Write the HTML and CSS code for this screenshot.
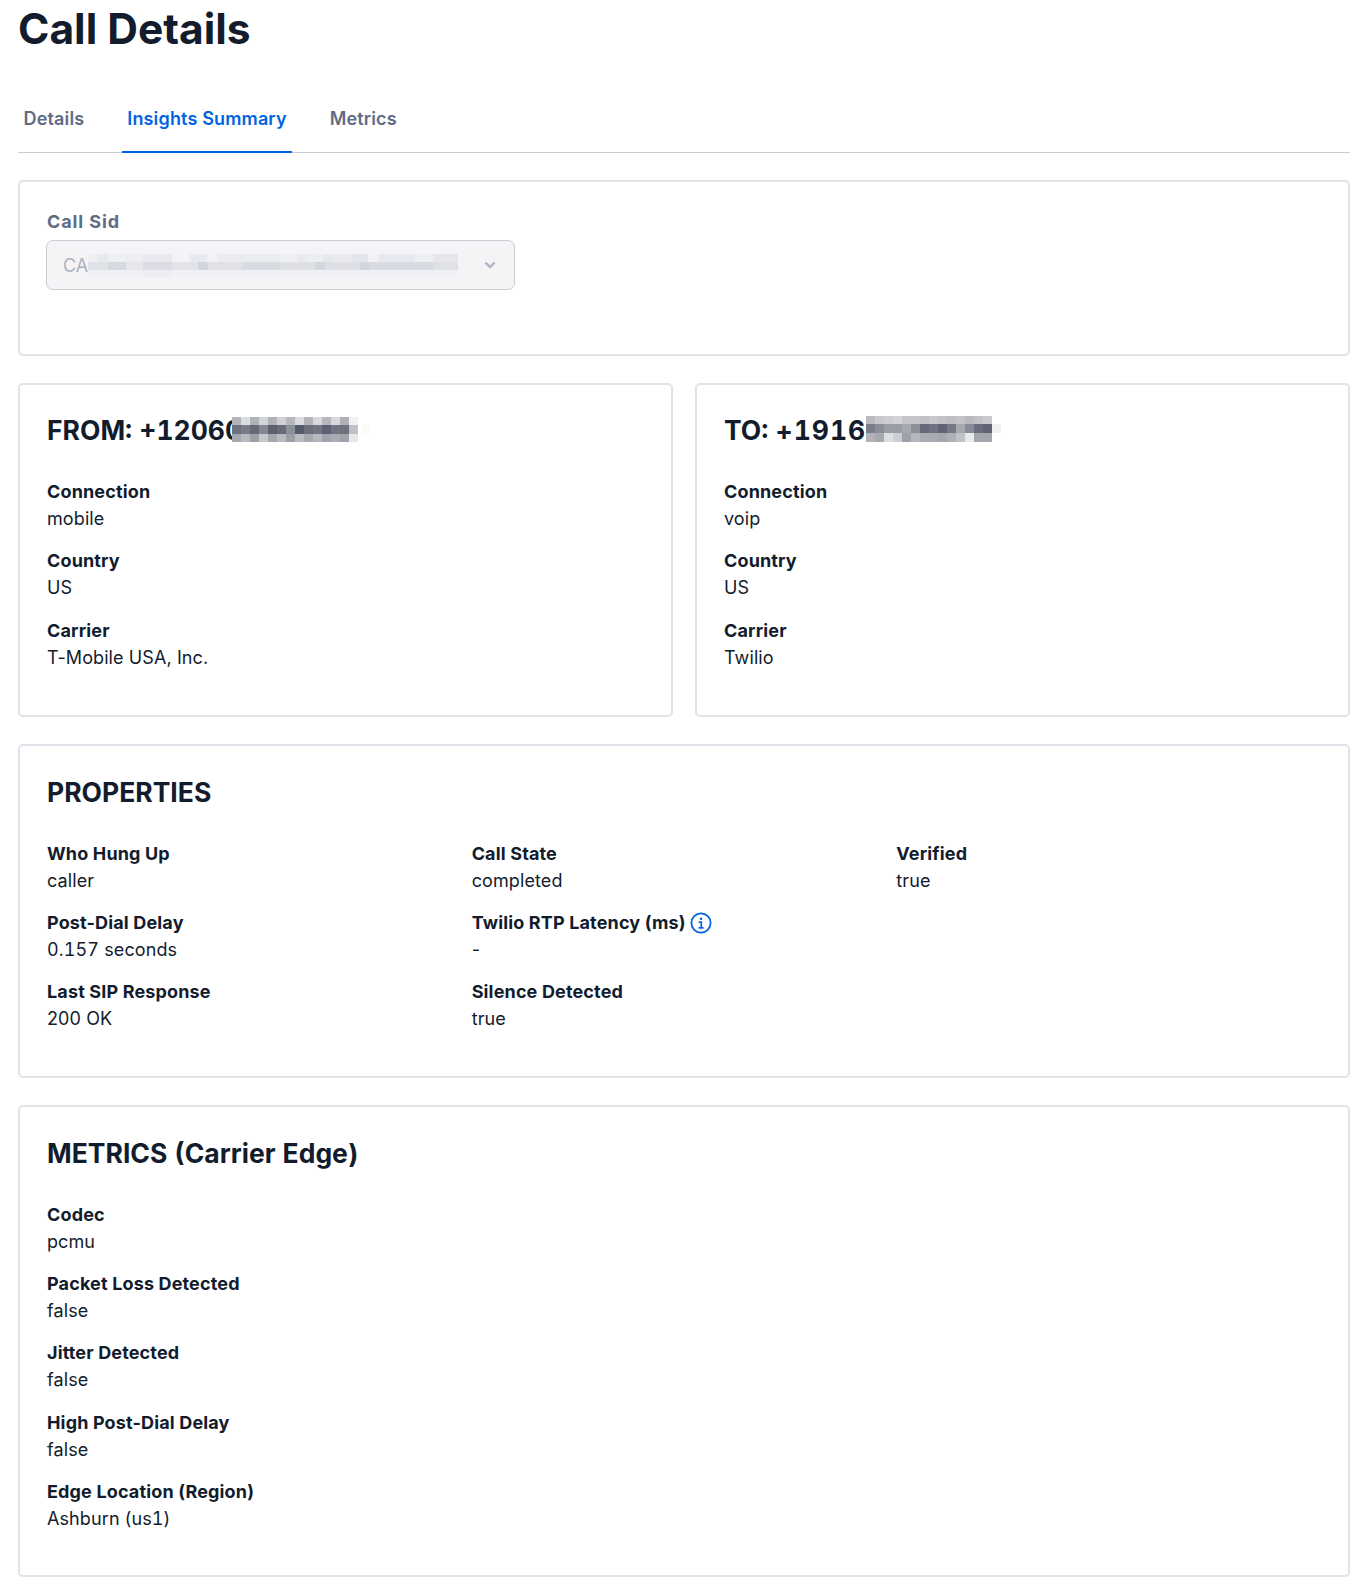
FILE: index.html
```html
<!DOCTYPE html>
<html lang="en">
<head>
  <meta charset="UTF-8">
  <title>Call Details</title>
  <link rel="stylesheet" href="styles.css">
</head>
<body>
  <h1 class="page-title">Call Details</h1>

  <div class="tabs">
    <a class="tab">Details</a>
    <a class="tab tab-active">Insights Summary</a>
    <a class="tab">Metrics</a>
  </div>

  <div class="card card-sid">
    <label class="sid-label">Call Sid</label>
    <div class="sid-select">
      <span class="sid-value">CA</span>
      <svg class="sid-redact" viewBox="88 253 375 23" width="375" height="23" shape-rendering="crispEdges">
        <rect x="88" y="253" width="370" height="8" fill="#eff0f3"/>
        <rect x="98" y="253" width="10" height="8" fill="#e8e9ee"/>
        <rect x="126" y="253" width="17" height="8" fill="#eceef1"/>
        <rect x="143" y="253" width="29" height="8" fill="#e8e9ee"/>
        <rect x="172" y="253" width="18" height="8" fill="#f3f3f5"/>
        <rect x="190" y="253" width="17" height="8" fill="#e8e9ee"/>
        <rect x="207" y="253" width="10" height="8" fill="#f2f2f5"/>
        <rect x="217" y="253" width="63" height="8" fill="#ebecf0"/>
        <rect x="297" y="253" width="10" height="8" fill="#e8e9ee"/>
        <rect x="307" y="253" width="16" height="8" fill="#eceef1"/>
        <rect x="323" y="253" width="10" height="8" fill="#e7e8ec"/>
        <rect x="333" y="253" width="19" height="8" fill="#eaebef"/>
        <rect x="352" y="253" width="16" height="8" fill="#e5e6eb"/>
        <rect x="368" y="253" width="10" height="8" fill="#f2f2f5"/>
        <rect x="378" y="253" width="37" height="8" fill="#e8e9ee"/>
        <rect x="433" y="253" width="25" height="8" fill="#e6e7ec"/>
        <rect x="88" y="261" width="20" height="8" fill="#e2e3e9"/>
        <rect x="108" y="261" width="18" height="8" fill="#d7d9e2"/>
        <rect x="126" y="261" width="17" height="8" fill="#e6e7ec"/>
        <rect x="143" y="261" width="29" height="8" fill="#dcdde4"/>
        <rect x="172" y="261" width="26" height="8" fill="#e3e4ea"/>
        <rect x="198" y="261" width="10" height="8" fill="#d3d6df"/>
        <rect x="208" y="261" width="35" height="8" fill="#e0e1e7"/>
        <rect x="243" y="261" width="37" height="8" fill="#d9dbe2"/>
        <rect x="280" y="261" width="35" height="8" fill="#dfe0e6"/>
        <rect x="315" y="261" width="10" height="8" fill="#d3d6df"/>
        <rect x="325" y="261" width="35" height="8" fill="#dfe0e6"/>
        <rect x="360" y="261" width="10" height="8" fill="#d3d6df"/>
        <rect x="370" y="261" width="63" height="8" fill="#d9dbe3"/>
        <rect x="433" y="261" width="25" height="8" fill="#e0e1e7"/>
        <rect x="88" y="269" width="370" height="7" fill="#f0f1f4"/>
        <rect x="143" y="269" width="29" height="7" fill="#eceef1"/>
      </svg>
      <svg class="chevron" viewBox="0 0 12 8" width="12" height="8"><path d="M1.5 1.5 6 6l4.5-4.5" fill="none" stroke="#aeb2c1" stroke-width="2.4"/></svg>
    </div>
  </div>

  <div class="two-up">
    <div class="card">
      <h2 class="card-title">FROM: +12060<svg class="redact redact-from" viewBox="0 0 138 25" width="138" height="25" shape-rendering="crispEdges">
        <rect x="0" y="0" width="9" height="8" fill="#b3b5bb"/><rect x="9" y="0" width="9" height="8" fill="#dcdde0"/><rect x="18" y="0" width="9" height="8" fill="#b0b2b9"/><rect x="27" y="0" width="9" height="8" fill="#d3d4d8"/><rect x="36" y="0" width="9" height="8" fill="#b1b3b9"/><rect x="45" y="0" width="9" height="8" fill="#d0d1d5"/><rect x="54" y="0" width="9" height="8" fill="#b5b7bc"/><rect x="63" y="0" width="9" height="8" fill="#dadbde"/><rect x="72" y="0" width="9" height="8" fill="#b3b5bb"/><rect x="81" y="0" width="9" height="8" fill="#d8d9dc"/><rect x="90" y="0" width="9" height="8" fill="#b6b8be"/><rect x="99" y="0" width="9" height="8" fill="#d8d9dd"/><rect x="108" y="0" width="9" height="8" fill="#aeb0b6"/><rect x="117" y="0" width="9" height="8" fill="#f0f1f2"/>
        <rect x="0" y="8" width="9" height="9" fill="#6d7180"/><rect x="9" y="8" width="9" height="9" fill="#777b88"/><rect x="18" y="8" width="9" height="9" fill="#666a79"/><rect x="27" y="8" width="9" height="9" fill="#858994"/><rect x="36" y="8" width="9" height="9" fill="#5c6071"/><rect x="45" y="8" width="9" height="9" fill="#666a79"/><rect x="54" y="8" width="9" height="9" fill="#8c909a"/><rect x="63" y="8" width="9" height="9" fill="#555a6c"/><rect x="72" y="8" width="9" height="9" fill="#6a6e7d"/><rect x="81" y="8" width="9" height="9" fill="#717583"/><rect x="90" y="8" width="9" height="9" fill="#5d6172"/><rect x="99" y="8" width="9" height="9" fill="#707482"/><rect x="108" y="8" width="9" height="9" fill="#6d7180"/><rect x="117" y="8" width="9" height="9" fill="#bfc1c6"/>
        <rect x="0" y="17" width="9" height="8" fill="#a5a8af"/><rect x="9" y="17" width="9" height="8" fill="#b8bac0"/><rect x="18" y="17" width="9" height="8" fill="#9da0a8"/><rect x="27" y="17" width="9" height="8" fill="#c6c8cc"/><rect x="36" y="17" width="9" height="8" fill="#a4a7ae"/><rect x="45" y="17" width="9" height="8" fill="#b9bbc1"/><rect x="54" y="17" width="9" height="8" fill="#9da0a8"/><rect x="63" y="17" width="9" height="8" fill="#b9bbc1"/><rect x="72" y="17" width="9" height="8" fill="#a6a9b0"/><rect x="81" y="17" width="9" height="8" fill="#b5b7bd"/><rect x="90" y="17" width="9" height="8" fill="#a0a3ab"/><rect x="99" y="17" width="9" height="8" fill="#a9acb3"/><rect x="108" y="17" width="9" height="8" fill="#a0a3ab"/><rect x="117" y="17" width="9" height="8" fill="#e6e7e9"/>
        <rect x="130" y="8" width="8" height="9" fill="#fafafa"/>
      </svg></h2>
      <div class="field"><div class="field-label">Connection</div><div class="field-value">mobile</div></div>
      <div class="field"><div class="field-label">Country</div><div class="field-value">US</div></div>
      <div class="field"><div class="field-label">Carrier</div><div class="field-value">T-Mobile USA, Inc.</div></div>
    </div>
    <div class="card">
      <h2 class="card-title">TO: <span class="spaced-digits">+1916</span><svg class="redact" viewBox="0 0 136 26" width="136" height="26" shape-rendering="crispEdges">
        <rect x="0" y="0" width="9" height="8" fill="#b9bbc0"/><rect x="9" y="0" width="9" height="8" fill="#c6c8cc"/><rect x="18" y="0" width="9" height="8" fill="#ccced2"/><rect x="27" y="0" width="9" height="8" fill="#d2d3d7"/><rect x="36" y="0" width="9" height="8" fill="#c3c5ca"/><rect x="45" y="0" width="9" height="8" fill="#c3c5ca"/><rect x="54" y="0" width="9" height="8" fill="#bfc1c6"/><rect x="63" y="0" width="9" height="8" fill="#c6c8cc"/><rect x="72" y="0" width="9" height="8" fill="#c0c2c7"/><rect x="81" y="0" width="9" height="8" fill="#bcbec3"/><rect x="90" y="0" width="9" height="8" fill="#c2c4c8"/><rect x="99" y="0" width="9" height="8" fill="#b8bac0"/><rect x="108" y="0" width="9" height="8" fill="#c0c2c7"/><rect x="117" y="0" width="9" height="8" fill="#c8cacd"/>
        <rect x="0" y="8" width="9" height="9" fill="#7a7e8a"/><rect x="9" y="8" width="9" height="9" fill="#8a8e98"/><rect x="18" y="8" width="9" height="9" fill="#9b9ea6"/><rect x="27" y="8" width="9" height="9" fill="#9a9da5"/><rect x="36" y="8" width="9" height="9" fill="#a6a9af"/><rect x="45" y="8" width="9" height="9" fill="#8b8f98"/><rect x="54" y="8" width="9" height="9" fill="#656979"/><rect x="63" y="8" width="9" height="9" fill="#6f7381"/><rect x="72" y="8" width="9" height="9" fill="#5f6373"/><rect x="81" y="8" width="9" height="9" fill="#757987"/><rect x="90" y="8" width="9" height="9" fill="#a7aab1"/><rect x="99" y="8" width="9" height="9" fill="#878b96"/><rect x="108" y="8" width="9" height="9" fill="#6a6e7c"/><rect x="117" y="8" width="9" height="9" fill="#5f6373"/><rect x="126" y="8" width="9" height="9" fill="#eeeff0"/>
        <rect x="0" y="17" width="9" height="9" fill="#b0b2b8"/><rect x="9" y="17" width="9" height="9" fill="#a6a9af"/><rect x="18" y="17" width="9" height="9" fill="#dedfe2"/><rect x="27" y="17" width="9" height="9" fill="#cdcfd3"/><rect x="36" y="17" width="9" height="9" fill="#9da0a8"/><rect x="45" y="17" width="9" height="9" fill="#b5b7bd"/><rect x="54" y="17" width="9" height="9" fill="#a9acb3"/><rect x="63" y="17" width="9" height="9" fill="#a9acb3"/><rect x="72" y="17" width="9" height="9" fill="#a4a7ae"/><rect x="81" y="17" width="9" height="9" fill="#aeb0b6"/><rect x="90" y="17" width="9" height="9" fill="#c0c2c7"/><rect x="99" y="17" width="9" height="9" fill="#e9eaec"/><rect x="108" y="17" width="9" height="9" fill="#a4a7ae"/><rect x="117" y="17" width="9" height="9" fill="#a4a7ae"/>
      </svg></h2>
      <div class="field"><div class="field-label">Connection</div><div class="field-value">voip</div></div>
      <div class="field"><div class="field-label">Country</div><div class="field-value">US</div></div>
      <div class="field"><div class="field-label">Carrier</div><div class="field-value">Twilio</div></div>
    </div>
  </div>

  <div class="card">
    <h2 class="card-title">PROPERTIES</h2>
    <div class="props-grid">
      <div>
        <div class="field"><div class="field-label">Who Hung Up</div><div class="field-value">caller</div></div>
        <div class="field"><div class="field-label">Post-Dial Delay</div><div class="field-value"><span class="num">0.157</span> seconds</div></div>
        <div class="field"><div class="field-label">Last SIP Response</div><div class="field-value">200 OK</div></div>
      </div>
      <div>
        <div class="field"><div class="field-label">Call State</div><div class="field-value">completed</div></div>
        <div class="field">
          <div class="field-label label-icon">Twilio RTP Latency (ms)
            <svg viewBox="0 0 22 22" width="22" height="22"><circle cx="11" cy="11" r="9.6" fill="none" stroke="#0263e0" stroke-width="1.8"/><circle cx="11" cy="6.7" r="1.3" fill="#0263e0"/><path d="M8.8 10.2h2.5v5.2M8.6 15.8h5" fill="none" stroke="#0263e0" stroke-width="1.7"/></svg>
          </div>
          <div class="field-value">-</div>
        </div>
        <div class="field"><div class="field-label">Silence Detected</div><div class="field-value">true</div></div>
      </div>
      <div>
        <div class="field"><div class="field-label">Verified</div><div class="field-value">true</div></div>
      </div>
    </div>
  </div>

  <div class="card card-metrics">
    <h2 class="card-title">METRICS (Carrier Edge)</h2>
    <div class="field"><div class="field-label">Codec</div><div class="field-value">pcmu</div></div>
    <div class="field"><div class="field-label">Packet Loss Detected</div><div class="field-value">false</div></div>
    <div class="field"><div class="field-label">Jitter Detected</div><div class="field-value">false</div></div>
    <div class="field"><div class="field-label">High Post-Dial Delay</div><div class="field-value">false</div></div>
    <div class="field"><div class="field-label">Edge Location (Region)</div><div class="field-value">Ashburn (<span class="num">us1</span>)</div></div>
  </div>
</body>
</html>
```

FILE: styles.css
```css
body {
  margin: 0;
  padding: 0 20px 0 18px;
  background: #fff;
  color: #121c2d;
  font-family: "Inter", sans-serif;
  font-size: 18px;
  line-height: 27px;
}

.page-title {
  margin: 0;
  font-size: 42.5px;
  line-height: 58px;
  font-weight: 700;
}

.tabs {
  display: flex;
  gap: 32px;
  margin-top: 41px;
  border-bottom: 1px solid #cacdd8;
  margin-bottom: 27px;
}

.tab {
  padding: 6px 5.5px 19px;
  margin-bottom: -1px;
  font-weight: 600;
  letter-spacing: .15px;
  color: #606b85;
}

.tab-active {
  color: #0263e0;
  border-bottom: 2px solid #0263e0;
}

.card {
  border: 2px solid #e1e3ea;
  border-radius: 5px;
  padding: 28px 27px 28px;
  margin-bottom: 27px;
}

.card-metrics {
  margin-bottom: 18px;
}

.card-sid {
  height: 176px;
  box-sizing: border-box;
  padding-top: 26px;
}

.sid-label {
  display: block;
  font-weight: 700;
  letter-spacing: .9px;
  color: #606b85;
  margin-bottom: 5px;
}

.sid-select {
  display: flex;
  align-items: center;
  box-sizing: border-box;
  width: 469px;
  height: 50px;
  margin-left: -1px;
  padding: 0 18px 0 16px;
  background: #f4f4f6;
  border: 1px solid #cacdd8;
  border-radius: 7px;
}

.sid-value {
  color: #aeb2c1;
}

.sid-redact {
  flex: none;
  filter: blur(.6px);
}

.chevron {
  margin-left: auto;
}

.two-up {
  display: grid;
  grid-template-columns: 1fr 1fr;
  gap: 22px;
}

.two-up .card {
  padding-bottom: 29px;
}

.card-title {
  margin: 0 0 30px;
  font-size: 26.5px;
  line-height: 36px;
  font-weight: 700;
  font-variant-numeric: tabular-nums;
}

.two-up .card-title {
  margin: -1.5px 0 30.5px;
}

.spaced-digits {
  letter-spacing: 1px;
}

.redact {
  vertical-align: -2px;
  filter: blur(.4px);
}

.redact-from {
  margin-left: -10px;
}

.field {
  margin-bottom: 15.3px;
}

.field-label {
  font-weight: 700;
  letter-spacing: .15px;
}

.field-value {
  letter-spacing: .1px;
}

.num {
  font-variant-numeric: tabular-nums;
}

.label-icon {
  display: flex;
  align-items: center;
  gap: 4px;
}

.props-grid {
  display: grid;
  grid-template-columns: repeat(3, 1fr);
}
```
